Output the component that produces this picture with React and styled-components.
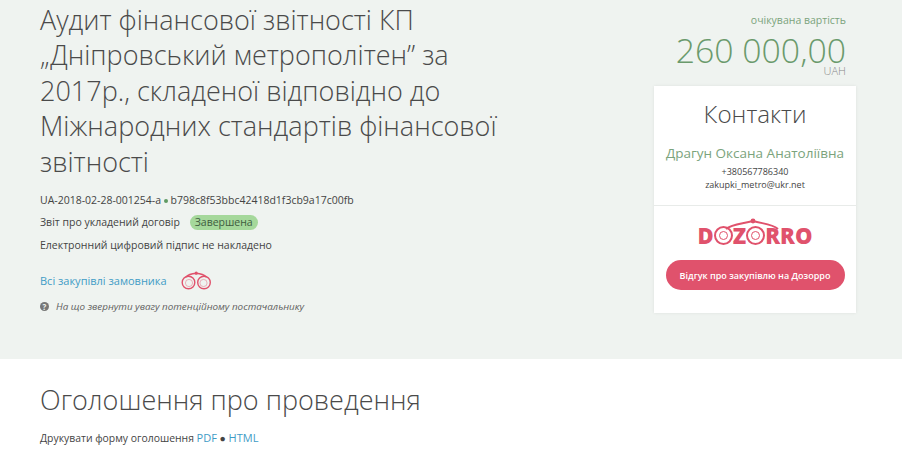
import React from 'react';
import styled, { createGlobalStyle } from 'styled-components';

const GlobalStyle = createGlobalStyle`
  html, body {
    margin: 0;
    background: #fff;
    font-family: "Open Sans", "Liberation Sans", sans-serif;
    color: #444;
  }
`;

function Binoculars() {
  return (
    <svg width="32" height="19" viewBox="0 0 32 19" fill="none" stroke="#e0526c" strokeWidth="1.4">
      <circle cx="8.5" cy="11.5" r="6.3" />
      <circle cx="24" cy="11.5" r="6.3" />
      <circle cx="9" cy="12" r="3.6" strokeWidth="0.7" opacity="0.6" />
      <circle cx="23.5" cy="12" r="3.6" strokeWidth="0.7" opacity="0.6" />
      <path d="M6 6 C8 3.5 12 2.5 16.2 2.2 C20 2.5 24 3.5 26.5 6" />
      <circle cx="16.2" cy="2.2" r="1.6" fill="#e0526c" stroke="none" />
    </svg>
  );
}

function DozorroLogo() {
  return (
    <LogoWrap>
      <LogoArc width="70" height="12" viewBox="0 0 70 12" fill="none" stroke="#e0526c" strokeWidth="2">
        <path d="M8 11 C14 6 24 6 35 3 C46 6 54 6 60 11" />
        <circle cx="35" cy="3" r="2.4" fill="#e0526c" stroke="none" />
      </LogoArc>
      <LogoText>D<LogoO />Z<LogoO />RRO</LogoText>
    </LogoWrap>
  );
}

export default function App() {
  return (
    <>
      <GlobalStyle />
      <Hero>
        <Main>
          <Title>Аудит фінансової звітності КП „Дніпровський метрополітен” за 2017р., складеної відповідно до Міжнародних стандартів фінансової звітності</Title>
          <MetaLine>UA-2018-02-28-001254-a <Dot /> b798c8f53bbc42418d1f3cb9a17c00fb</MetaLine>
          <MetaLine>Звіт про укладений договір <Badge>Завершена</Badge></MetaLine>
          <MetaLine>Електронний цифровий підпис не накладено</MetaLine>
          <BuyerRow>
            <BlueLink href="#">Всі закупівлі замовника</BlueLink>
            <Binoculars />
          </BuyerRow>
          <HintRow>
            <HintIcon>?</HintIcon>
            <HintText>На що звернути увагу потенційному постачальнику</HintText>
          </HintRow>
        </Main>
        <Side>
          <PriceLabel>очікувана вартість</PriceLabel>
          <Price>260 000,00</Price>
          <Currency>UAH</Currency>
          <Card>
            <ContactBlock>
              <ContactTitle>Контакти</ContactTitle>
              <ContactName>Драгун Оксана Анатоліївна</ContactName>
              <ContactLine>+380567786340</ContactLine>
              <ContactLine>zakupki_metro@ukr.net</ContactLine>
            </ContactBlock>
            <DozorroBlock>
              <DozorroLogo />
              <ReviewButton>Відгук про закупівлю на Дозорро</ReviewButton>
            </DozorroBlock>
          </Card>
        </Side>
      </Hero>
      <Section>
        <SectionTitle>Оголошення про проведення</SectionTitle>
        <PrintLine>
          Друкувати форму оголошення <BlueLink href="#">PDF</BlueLink> ● <BlueLink href="#">HTML</BlueLink>
        </PrintLine>
      </Section>
    </>
  );
}

const Hero = styled.div`
  height: 359px;
  box-sizing: border-box;
  background: #eff3f0;
  padding: 0 46px 0 40px;
  display: flex;
  justify-content: space-between;
  overflow: hidden;
`;

const Main = styled.div`
  width: 480px;
  padding-top: 1.5px;
`;

const Title = styled.h1`
  margin: 0 0 9.5px;
  font-size: 27px;
  line-height: 35.5px;
  font-weight: 300;
  color: #4a4a4a;
`;

const MetaLine = styled.div`
  font-size: 10.5px;
  line-height: 22.5px;
  height: 22.5px;
  color: #444;
`;

const Dot = styled.span`
  display: inline-block;
  width: 4px;
  height: 4px;
  border-radius: 50%;
  background: #5f9a62;
  vertical-align: 1px;
`;

const Badge = styled.span`
  display: inline-block;
  margin-left: 7px;
  padding: 0 5px;
  line-height: 15px;
  border-radius: 8px;
  background: #a5d89b;
  color: #3f5c3f;
`;

const BuyerRow = styled.div`
  display: flex;
  align-items: center;
  gap: 13px;
  margin-top: 15px;
  font-size: 11px;
`;

const BlueLink = styled.a`
  color: #3f9cc6;
  text-decoration: none;
  font-size: 11px;
`;

const HintRow = styled.div`
  display: flex;
  align-items: center;
  gap: 7px;
  margin-top: 9px;
`;

const HintIcon = styled.span`
  width: 9px;
  height: 9px;
  border-radius: 50%;
  background: #777;
  color: #eff3f0;
  font-size: 8px;
  line-height: 9px;
  font-weight: 700;
  text-align: center;
`;

const HintText = styled.em`
  font-size: 9.85px;
  color: #5f5f5f;
`;

const Side = styled.div`
  width: 202px;
  text-align: right;
  padding-top: 13px;
`;

const PriceLabel = styled.div`
  font-size: 10.5px;
  line-height: 15px;
  color: #7ba37c;
  padding-right: 10px;
`;

const Price = styled.div`
  margin-top: 7px;
  font-size: 33.8px;
  line-height: 30px;
  font-weight: 300;
  color: #6a9a6c;
  padding-right: 10px;
`;

const Currency = styled.div`
  font-size: 11px;
  line-height: 12px;
  font-weight: 300;
  color: #888;
  padding-right: 10px;
`;

const Card = styled.div`
  margin-top: 9px;
  background: #fff;
  box-shadow: 0 0 3px rgba(0, 0, 0, 0.08);
  text-align: center;
`;

const ContactBlock = styled.div`
  height: 120px;
  box-sizing: border-box;
  padding-top: 10px;
  border-bottom: 1px solid #e8ebe9;
`;

const ContactTitle = styled.div`
  font-size: 24.2px;
  line-height: 36px;
  font-weight: 300;
  color: #4a4a4a;
`;

const ContactName = styled.div`
  margin: 11px 0 2px;
  font-size: 13.5px;
  line-height: 20px;
  color: #7ba37c;
`;

const ContactLine = styled.div`
  font-size: 9px;
  line-height: 13px;
  color: #444;
`;

const DozorroBlock = styled.div`
  height: 107px;
  box-sizing: border-box;
  padding-top: 12px;
  display: flex;
  flex-direction: column;
  align-items: center;
`;

const LogoWrap = styled.div`
  position: relative;
  height: 29px;
  display: flex;
  align-items: flex-end;
`;

const LogoArc = styled.svg`
  position: absolute;
  left: 20px;
  top: 0;
`;

const LogoText = styled.div`
  font-size: 22px;
  line-height: 24px;
  font-weight: 800;
  color: #e0526c;
  display: flex;
  align-items: center;
`;

const LogoO = styled.span`
  width: 19px;
  height: 19px;
  box-sizing: border-box;
  border-radius: 50%;
  border: 2px solid #e0526c;
  outline: 1px solid #e0526c;
  outline-offset: -6px;
`;

const ReviewButton = styled.button`
  margin-top: 13px;
  width: 179px;
  height: 30px;
  border: 0;
  border-radius: 15px;
  background: #e0526c;
  color: #fff;
  font-family: inherit;
  font-size: 9px;
  font-weight: 600;
`;

const Section = styled.div`
  height: 105px;
  padding: 23px 40px 0;
  box-sizing: border-box;
  background: #fff;
  overflow: hidden;
`;

const SectionTitle = styled.h2`
  margin: 0;
  font-size: 27px;
  line-height: 36px;
  font-weight: 300;
  color: #4a4a4a;
`;

const PrintLine = styled.div`
  margin-top: 11px;
  font-size: 10.4px;
  line-height: 18px;
  color: #444;
`;
